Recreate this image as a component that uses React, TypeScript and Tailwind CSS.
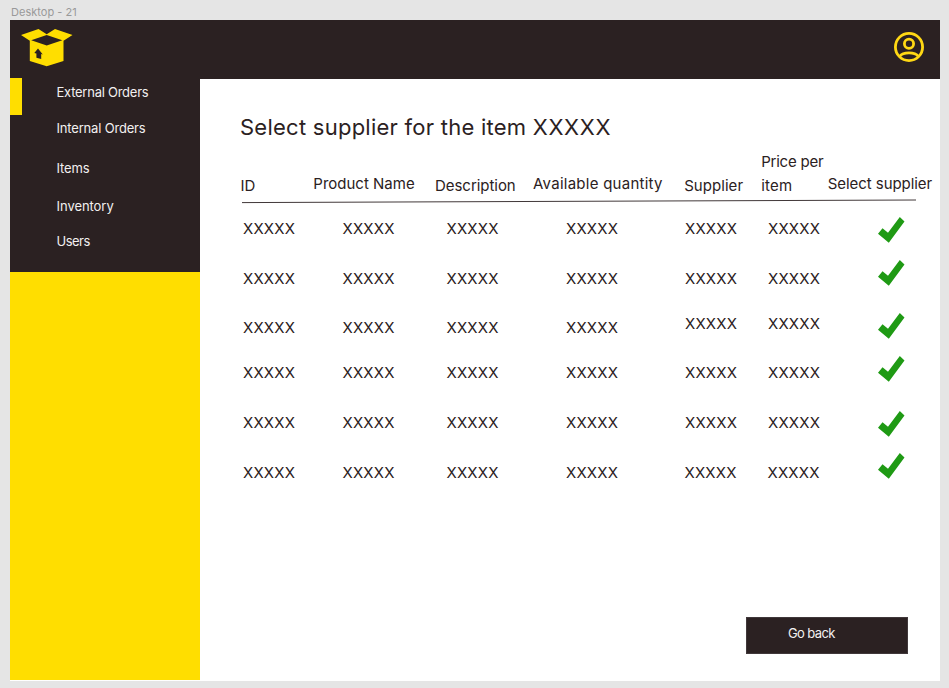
const navItems = [
  { label: "External Orders", style: "pt-[3px] tracking-[-0.25px]" },
  { label: "Internal Orders", style: "pt-[16px] tracking-[-0.18px]" },
  { label: "Items", style: "pt-[20px] tracking-[-0.1px]" },
  { label: "Inventory", style: "pt-[18px] tracking-[-0.05px]" },
  { label: "Users", style: "pt-[15px] tracking-[-0.5px]" },
];

const rows = [
  { check: "-mt-[2px]", price: "", shift: "" },
  { check: "-mt-[9px]", price: "", shift: "" },
  { check: "-mt-[5px]", price: "-mt-[4px]", shift: "-ml-[0.5px]" },
  { check: "-mt-[7px]", price: "", shift: "-ml-[0.5px]" },
  { check: "-mt-[2px]", price: "", shift: "" },
  { check: "-mt-[10px]", price: "-ml-[0.5px]", shift: "" },
];

function BoxLogo() {
  return (
    <svg className="h-[38px] w-[52px]" viewBox="0 0 52 38">
      <path fill="#ffde00" d="M0 6L17.5 0L25.7 5.3L34 0L51.5 6L42.5 11.8V32L25.7 37.2L8.8 32V11.8Z" />
      <path fill="#2b2122" d="M25.7 6L41.3 11.2L25.7 16.5L10.2 11.2Z" />
      <path fill="#2b2122" d="M17 19.5L21.8 25.4L20.2 25V29.9L15.4 28.8V24.4L13.3 24Z" />
    </svg>
  );
}

function AccountIcon() {
  return (
    <svg className="size-[30px]" viewBox="0 0 30 30" fill="none" stroke="#ffd814" strokeWidth="2.8">
      <circle cx="15" cy="15" r="13.6" />
      <circle cx="15" cy="11.7" r="4.6" />
      <path d="M5.8 24.3C8 21.2 11.5 20.9 15 20.9S22 21.2 24.2 24.3" />
    </svg>
  );
}

function Check() {
  return (
    <svg className="h-[26px] w-[27px]" viewBox="0 0 27 26">
      <path fill="#1f9a14" d="M0 16.7L4.5 11.2L10 15.8L21.8 0L26.5 4.4L10.8 25.8Z" />
    </svg>
  );
}

export default function App() {
  return (
    <div className="flex h-[688px] w-[949px] flex-col overflow-hidden bg-[#e5e5e5] pl-[10px] font-['Inter',sans-serif] text-[#2b2122]">
      <div className="h-[20px] pt-[4px] pl-px text-[11px] leading-4 tracking-[0.03px] text-[#999]">
        Desktop - 21
      </div>
      <div className="flex h-[661px] w-[930px] flex-col bg-white">
        <header className="flex h-[59px] shrink-0 justify-between bg-[#2b2122] pt-[9px] pr-[16px] pl-[11px]">
          <BoxLogo />
          <div className="pt-[3px]">
            <AccountIcon />
          </div>
        </header>
        <div className="flex min-h-0 flex-1">
          <aside className="mb-px flex w-[190px] shrink-0 flex-col bg-[#ffde00]">
            <nav className="flex h-[193px] bg-[#2b2122]">
              <div className="-mt-px h-[37px] w-[12px] bg-[#ffde00]" />
              <ul className="pl-[34.5px] text-[13px] leading-5 text-[#f2f0f0]">
                {navItems.map((item) => (
                  <li key={item.label} className={item.style}>
                    {item.label}
                  </li>
                ))}
              </ul>
            </nav>
          </aside>
          <main className="flex flex-1 flex-col">
            <h1 className="pt-[33px] pl-[40px] text-[22px] leading-[30px] tracking-[0.25px]">
              Select supplier for the item <span className="tracking-[0.65px]">XXXXX</span>
            </h1>
            <div className="flex h-[58px] items-end pl-[40.5px] text-[15px] leading-5 whitespace-nowrap">
              <div className="mb-[4px] w-[72.8px] tracking-[0px]">ID</div>
              <div className="mb-[6px] w-[121.7px] tracking-[0px]">Product Name</div>
              <div className="mb-[4px] w-[98px] tracking-[-0.04px]">Description</div>
              <div className="mb-[6px] w-[151.2px] tracking-[0.26px]">Available quantity</div>
              <div className="mb-[4px] w-[77px] tracking-[0.05px]">Supplier</div>
              <div className="mb-[2px] w-[66.6px] leading-6 tracking-[-0.22px]">
                Price per
                <br />
                <span className="tracking-[0.2px]">item</span>
              </div>
              <div className="mb-[6px] tracking-[-0.06px]">Select supplier</div>
            </div>
            <svg className="ml-[42px] h-[4px] w-[674px] shrink-0 overflow-visible" viewBox="0 0 674 4">
              <path d="M0 2.6L674 0" stroke="#2b2122" strokeWidth="0.9" />
            </svg>
            <div className="mt-[15px] grid grid-rows-[50px_49px_45px_50px_50px_20px] pl-[43px] text-[15px] leading-5 tracking-[0.2px]">
              {rows.map((row, i) => (
                <div key={i} className="grid grid-cols-[99.5px_104px_119.5px_119px_83px_110px_27px]">
                  <span>XXXXX</span>
                  <span>XXXXX</span>
                  <span>XXXXX</span>
                  <span>XXXXX</span>
                  <span className={row.price}>XXXXX</span>
                  <span className={row.price}>XXXXX</span>
                  <span className={`${row.check} ${row.shift} h-[26px]`}>
                    <Check />
                  </span>
                </div>
              ))}
            </div>
            <button className="mt-auto mr-[32px] mb-[27px] h-[37px] w-[162px] self-end border border-[#40383a] bg-[#2b2122] pb-[5px] pl-[41px] text-left text-[13px] leading-5 tracking-[-0.63px] text-[#f2f0f0]">
              Go back
            </button>
          </main>
        </div>
      </div>
    </div>
  );
}
